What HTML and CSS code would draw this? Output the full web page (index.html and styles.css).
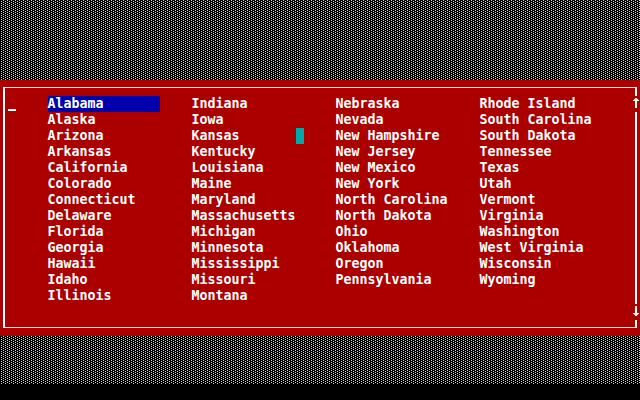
FILE: index.html
```html
<!DOCTYPE html>
<html lang="en">
<head>
<meta charset="utf-8">
<title>States</title>
<link rel="stylesheet" href="styles.css">
</head>
<body>
<main class="screen">
<svg class="shade" width="640" height="384" shape-rendering="crispEdges"><defs><pattern id="dots" width="4" height="2" patternUnits="userSpaceOnUse"><path fill="#5ff" d="M3 0h1v1H3zM1 1h1v1H1z"/></pattern></defs><rect width="640" height="384" fill="url(#dots)"/></svg>
<section class="dialog">
<div class="frame">
<ul class="list">
<li class="item selected">Alabama</li><li class="item">Alaska</li><li class="item">Arizona</li><li class="item">Arkansas</li><li class="item">California</li><li class="item">Colorado</li><li class="item">Connecticut</li><li class="item">Delaware</li><li class="item">Florida</li><li class="item">Georgia</li><li class="item">Hawaii</li><li class="item">Idaho</li><li class="item">Illinois</li>
<li class="item">Indiana</li><li class="item">Iowa</li><li class="item">Kansas</li><li class="item">Kentucky</li><li class="item">Louisiana</li><li class="item">Maine</li><li class="item">Maryland</li><li class="item">Massachusetts</li><li class="item">Michigan</li><li class="item">Minnesota</li><li class="item">Mississippi</li><li class="item">Missouri</li><li class="item">Montana</li>
<li class="item">Nebraska</li><li class="item">Nevada</li><li class="item">New Hampshire</li><li class="item">New Jersey</li><li class="item">New Mexico</li><li class="item">New York</li><li class="item">North Carolina</li><li class="item">North Dakota</li><li class="item">Ohio</li><li class="item">Oklahoma</li><li class="item">Oregon</li><li class="item">Pennsylvania</li><li class="item"></li>
<li class="item">Rhode Island</li><li class="item">South Carolina</li><li class="item">South Dakota</li><li class="item">Tennessee</li><li class="item">Texas</li><li class="item">Utah</li><li class="item">Vermont</li><li class="item">Virginia</li><li class="item">Washington</li><li class="item">West Virginia</li><li class="item">Wisconsin</li><li class="item">Wyoming</li>
</ul>
</div>
<span class="cursor"></span>
<span class="mouse"></span>
<svg class="arrow up" viewBox="0 0 8 16" shape-rendering="crispEdges"><path d="M3 2h2v1h1v1h1v1H5v7H3V5H1V4h1V3h1z"/></svg>
<svg class="arrow down" viewBox="0 0 8 16" shape-rendering="crispEdges"><path d="M3 2h2v7h2v1H6v1H5v1H3v-1H2v-1H1V9h2z"/></svg>
</section>
</main>
</body>
</html>
```
FILE: styles.css
```css
* { box-sizing: border-box; }
body { margin: 0; background: #000; overflow: hidden; }
.screen { position: relative; width: 640px; height: 384px; padding: 80px 0 48px; }
.shade { position: absolute; top: 0; left: 0; }
.dialog { position: relative; height: 256px; padding: 7px 3px 8px; background: #a00; }
.frame {
  height: 241px;
  border: 1px solid #fff;
  border-width: 1px 2px;
  padding: 8px 0 0 43px;
}
.list {
  display: grid;
  grid-template-rows: repeat(13, 16px);
  grid-auto-flow: column;
  grid-auto-columns: 144px;
  margin: 0;
  padding: 0;
  list-style: none;
}
.item {
  width: 112px;
  font: bold 13.29px/16px "DejaVu Sans Mono", monospace;
  text-indent: -0.5px;
  white-space: pre;
  color: #fff;
}
.selected { background: #00a; }
.cursor, .mouse, .arrow { position: absolute; }
.cursor { left: 8px; top: 29px; width: 8px; height: 2px; background: #fff; }
.mouse { left: 296px; top: 48px; width: 8px; height: 16px; background: #0aa; }
.arrow { left: 632px; width: 8px; height: 16px; background: #a00; fill: #fff; }
.up { top: 16px; }
.down { top: 224px; }
```
